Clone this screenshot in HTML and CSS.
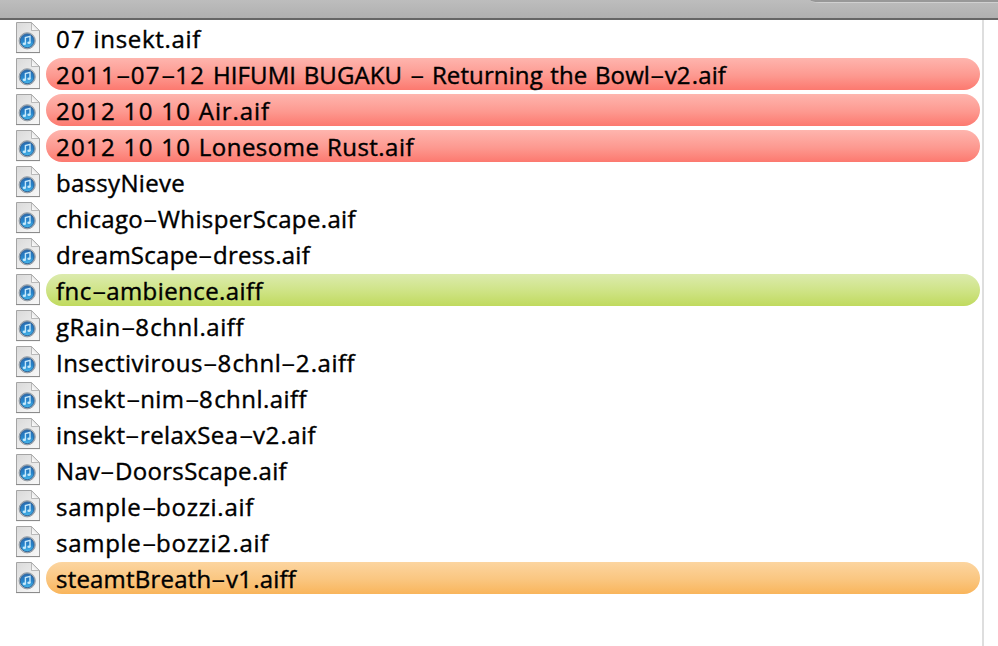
FILE: index.html
```html
<!DOCTYPE html>
<html lang="en">
<head>
<meta charset="utf-8">
<title>Files</title>
<link rel="stylesheet" href="styles.css">
</head>
<body>
<svg class="defs" width="0" height="0" aria-hidden="true">
  <defs>
    <linearGradient id="paper" x1="0" y1="0" x2="0.7" y2="1"><stop offset="0" stop-color="#dadada"/><stop offset="1" stop-color="#f5f5f5"/></linearGradient>
    <linearGradient id="disc" x1="0" y1="0" x2="0" y2="1"><stop offset="0" stop-color="#286ab2"/><stop offset=".5" stop-color="#2683c9"/><stop offset="1" stop-color="#49b9ec"/></linearGradient>
    <linearGradient id="fold" x1="0" y1="1" x2="1" y2="0"><stop offset="0" stop-color="#fff"/><stop offset="1" stop-color="#d5d5d5"/></linearGradient>
  </defs>
  <symbol id="audio" viewBox="0 0 24 32">
    <path d="M.5.5H15.5L23.5 8.5V30.5H.5Z" fill="url(#paper)" stroke="#a4a4a4"/>
    <path d="M0 30.6H24" stroke="#888"/>
    <path d="M15.5.7V8.5H23.3Z" fill="url(#fold)" stroke="#aaa" stroke-width=".8"/>
    <circle cx="11.2" cy="18.8" r="8.1" fill="#bfc4c9" stroke="#8d959d" stroke-width=".9"/>
    <circle cx="11.2" cy="18.8" r="6.9" fill="url(#disc)" stroke="#275d94" stroke-width=".9"/>
    <path d="M9.4 21.6V15.5L14 14.4V20.7" fill="none" stroke="#c5e8fb" stroke-width="1.4"/>
    <ellipse cx="8.4" cy="21.8" rx="1.7" ry="1.3" fill="#c5e8fb"/><ellipse cx="13" cy="20.8" rx="1.7" ry="1.3" fill="#c5e8fb"/>
  </symbol>
</svg>
<div class="window">
  <header class="toolbar"><div class="field"></div></header>
  <main class="content">
    <ul class="files" id="files"></ul>
    <div class="gutter"></div>
  </main>
</div>
<script src="files.js"></script>
</body>
</html>
```
FILE: styles.css
```css
* { box-sizing: border-box; }
body { margin: 0; background: #fff; overflow: hidden; }
.defs { position: absolute; }
.window { height: 646px; display: flex; flex-direction: column; }
.toolbar { height: 20px; flex: none; background: linear-gradient(#bdbdbd, #b0b0b0); border-bottom: 2px solid #666; display: flex; justify-content: flex-end; }
.field { width: 188px; height: 3px; background: #989898; border-bottom: 1px solid #d0d0d0; border-bottom-left-radius: 9px 3px; }
.content { flex: 1; display: flex; min-height: 0; }
.files { list-style: none; margin: 0; padding: 2px 2px 0 16px; width: 982px; }
.file { height: 36px; display: flex; gap: 6px; }
.icon { width: 24px; height: 32px; flex: none; }
.label { flex: 1; height: 32px; padding-left: 10px; border-radius: 16px; color: #000; font: 24px/34px "Open Sans", "Noto Sans", sans-serif; -webkit-text-stroke: .4px #000; white-space: pre; }
.red { background: linear-gradient(#feb5ae, #fd9990 55%, #fc796f); }
.green { background: linear-gradient(#dcebae, #cee384 55%, #c0da5e); }
.orange { background: linear-gradient(#fcd5a0, #fac680 55%, #f9b55b); }
.digit { letter-spacing: 1.3px; }
.dash { display: inline-block; width: 14.6px; text-align: center; transform: scaleX(2); letter-spacing: 0; -webkit-text-stroke: 0; }
.gutter { width: 16px; border-left: 2px solid #dedede; }
```
FILE: files.js
```js
// name, label width in pixels, colour tag
const files = [
  ["07 insekt.aif", 145, ""],
  ["2011-07-12 HIFUMI BUGAKU - Returning the Bowl-v2.aif", 670, "red"],
  ["2012 10 10 Air.aif", 214, "red"],
  ["2012 10 10 Lonesome Rust.aif", 358, "red"],
  ["bassyNieve", 129, ""],
  ["chicago-WhisperScape.aif", 300, ""],
  ["dreamScape-dress.aif", 254, ""],
  ["fnc-ambience.aiff", 207, "green"],
  ["gRain-8chnl.aiff", 188, ""],
  ["Insectivirous-8chnl-2.aiff", 299, ""],
  ["insekt-nim-8chnl.aiff", 251, ""],
  ["insekt-relaxSea-v2.aif", 260, ""],
  ["Nav-DoorsScape.aif", 231, ""],
  ["sample-bozzi.aif", 198, ""],
  ["sample-bozzi2.aif", 213, ""],
  ["steamtBreath-v1.aiff", 240, "orange"]
];
const list = document.getElementById("files");
for (const [name, width, tag] of files) {
  const row = document.createElement("li");
  row.className = "file";
  row.innerHTML = '<svg class="icon"><use href="#audio"/></svg><div class="label ' + tag + '"><span class="name"></span></div>';
  const text = row.querySelector(".name");
  text.innerHTML = name.replace(/[0-9 ]+|-/g, run => '<span class="' + (run === "-" ? "dash" : "digit") + '">' + run + "</span>");
  list.append(row);
  const free = name.replace(/[0-9 -]/g, "").length;
  text.style.letterSpacing = (width - text.getBoundingClientRect().width) / free + "px";
}
```
